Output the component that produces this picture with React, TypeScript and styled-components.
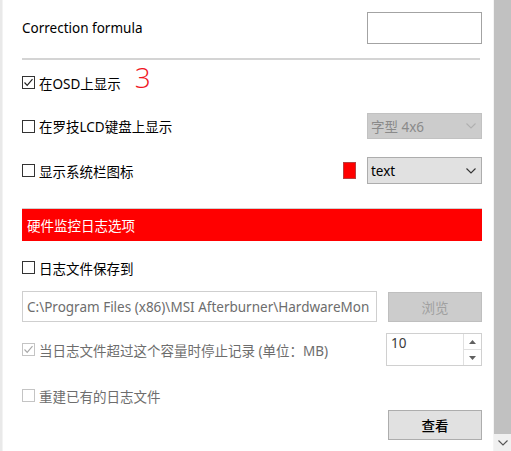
import React from "react";
import styled, { createGlobalStyle } from "styled-components";

const Global = createGlobalStyle`
  html, body { margin: 0; padding: 0; background: #fff; }
  body { font-family: "Noto Sans", "Noto Sans CJK SC", sans-serif; font-size: 13.5px; color: #000; }
`;

const Window = styled.div`
  width: 511px;
  height: 451px;
  display: flex;
  overflow: hidden;
  background: #fff;
`;

const LeftEdge = styled.div`
  width: 3px;
  background: #e9e9e9;
  border-right: 1px solid #f3f3f3;
  box-sizing: border-box;
`;

const Content = styled.div`
  flex: 1;
  display: flex;
  flex-direction: column;
  padding: 0 11px 0 19px;
  min-width: 0;
`;

const Row = styled.div<{ $top: number; $h: number; $start?: boolean }>`
  margin-top: ${(p) => p.$top}px;
  height: ${(p) => p.$h}px;
  display: flex;
  align-items: center;
  justify-content: ${(p) => (p.$start ? "flex-start" : "space-between")};
  flex-shrink: 0;
`;

const Label = styled.span<{ $disabled?: boolean }>`
  color: ${(p) => (p.$disabled ? "#6d6d6d" : "#000")};
  white-space: nowrap;
`;

const TextBox = styled.div<{ $w: number; $h: number }>`
  width: ${(p) => p.$w}px;
  height: ${(p) => p.$h}px;
  box-sizing: border-box;
  border: 1px solid #a3a3a3;
  background: #fff;
`;

const Separator = styled.div`
  margin-top: 14px;
  height: 2px;
  width: 458px;
  background: #d4d4d4;
  flex-shrink: 0;
`;

const CheckLabel = styled.label`
  display: flex;
  align-items: center;
  gap: 4px;
`;

const Box = styled.span<{ $disabled?: boolean }>`
  width: 13px;
  height: 13px;
  box-sizing: border-box;
  border: 1px solid ${(p) => (p.$disabled ? "#c4c4c4" : "#333")};
  background: #fff;
  display: flex;
  align-items: center;
  justify-content: center;
`;

const Badge = styled.span`
  font-family: "Open Sans", "Noto Sans", sans-serif;
  font-weight: 300;
  font-size: 28px;
  line-height: 1;
  color: #f0141e;
  margin-left: 14px;
  margin-top: -11px;
`;

const Right = styled.div`
  display: flex;
  align-items: center;
  gap: 11px;
`;

const Swatch = styled.span`
  width: 13px;
  height: 17px;
  box-sizing: border-box;
  background: #ff0000;
  border: 1px solid #b84040;
`;

const Select = styled.div<{ $disabled?: boolean; $h: number }>`
  width: 115px;
  height: ${(p) => p.$h}px;
  box-sizing: border-box;
  border: 1px solid ${(p) => (p.$disabled ? "#c2c2c2" : "#adadad")};
  background: ${(p) => (p.$disabled ? "#cccccc" : "#e1e1e1")};
  color: ${(p) => (p.$disabled ? "#8a8a8a" : "#000")};
  display: flex;
  align-items: center;
  justify-content: space-between;
  padding: 0 5px 0 3px;
`;

const Banner = styled.div`
  margin-top: 24px;
  height: 33px;
  flex-shrink: 0;
  width: 460px;
  box-sizing: border-box;
  background: #ff0000;
  border-top: 1px solid #d0d0d0;
  color: #fff;
  display: flex;
  align-items: center;
  padding-left: 5px;
`;

const PathBox = styled.div`
  width: 355px;
  height: 31px;
  box-sizing: border-box;
  border: 1px solid #cfcfcf;
  background: #fff;
  color: #6d6d6d;
  display: flex;
  align-items: center;
  padding-left: 4px;
  overflow: hidden;
  white-space: nowrap;
`;

const Button = styled.div<{ $disabled?: boolean }>`
  width: 94px;
  height: 30px;
  box-sizing: border-box;
  border: 1px solid ${(p) => (p.$disabled ? "#bfbfbf" : "#adadad")};
  background: ${(p) => (p.$disabled ? "#cccccc" : "#e1e1e1")};
  color: ${(p) => (p.$disabled ? "#a0a0a0" : "#000")};
  display: flex;
  align-items: center;
  justify-content: center;
  font-weight: ${(p) => (p.$disabled ? 400 : 500)};
`;

const Spin = styled.div`
  width: 96px;
  height: 33px;
  box-sizing: border-box;
  border: 1px solid #d0d0d0;
  background: #fff;
  display: flex;
`;

const SpinValue = styled.div`
  flex: 1;
  padding: 0 0 0 4px;
  color: #3a3a3a;
`;

const SpinButtons = styled.div`
  width: 17px;
  border-left: 1px solid #e0e0e0;
  display: flex;
  flex-direction: column;
`;

const SpinBtn = styled.div<{ $first?: boolean }>`
  flex: 1;
  display: flex;
  align-items: center;
  justify-content: center;
  border-top: ${(p) => (p.$first ? "none" : "1px solid #e0e0e0")};
`;

const ButtonRow = styled.div`
  margin-top: 1px;
  height: 30px;
  display: flex;
  justify-content: flex-end;
  flex-shrink: 0;
`;

const ScrollBar = styled.div`
  width: 17px;
  display: flex;
  flex-direction: column;
  background: #f0f0f0;
  border-left: 1px solid #f4f4f4;
`;

const Thumb = styled.div`
  height: 434px;
  background: #c1c1c1;
`;

const ArrowArea = styled.div`
  flex: 1;
  display: flex;
  align-items: center;
  justify-content: center;
`;

const Check = ({ color }: { color: string }) => (
  <svg width="11" height="11" viewBox="0 0 11 11">
    <path d="M1.5 5.5 L4.2 8.3 L9.5 2.2" fill="none" stroke={color} strokeWidth="1.2" />
  </svg>
);

const Chevron = ({ color }: { color: string }) => (
  <svg width="10" height="6" viewBox="0 0 10 6">
    <path d="M0.5 0.5 L5 5 L9.5 0.5" fill="none" stroke={color} strokeWidth="1.1" />
  </svg>
);

const Tri = ({ up }: { up?: boolean }) => (
  <svg width="7" height="4" viewBox="0 0 7 4">
    <path d={up ? "M0 4 L3.5 0 L7 4 Z" : "M0 0 L3.5 4 L7 0 Z"} fill="#606060" />
  </svg>
);

const CheckItem = ({
  text,
  checked,
  disabled,
}: {
  text: string;
  checked?: boolean;
  disabled?: boolean;
}) => (
  <CheckLabel>
    <Box $disabled={disabled}>{checked && <Check color={disabled ? "#a8a8a8" : "#222"} />}</Box>
    <Label $disabled={disabled}>{text}</Label>
  </CheckLabel>
);

export default function App() {
  return (
    <>
      <Global />
      <Window>
        <LeftEdge />
        <Content>
          <Row $top={12} $h={32}>
            <Label>Correction formula</Label>
            <TextBox $w={115} $h={32} />
          </Row>
          <Separator />
          <Row $top={6} $h={33} $start>
            <CheckItem text="在OSD上显示" checked />
            <Badge>3</Badge>
          </Row>
          <Row $top={14} $h={26}>
            <CheckItem text="在罗技LCD键盘上显示" />
            <Select $disabled $h={26}>
              <span>字型 4x6</span>
              <Chevron color="#b0b0b0" />
            </Select>
          </Row>
          <Row $top={18} $h={27}>
            <CheckItem text="显示系统栏图标" />
            <Right>
              <Swatch />
              <Select $h={27}>
                <span>text</span>
                <Chevron color="#333" />
              </Select>
            </Right>
          </Row>
          <Banner>硬件监控日志选项</Banner>
          <Row $top={13} $h={27}>
            <CheckItem text="日志文件保存到" />
          </Row>
          <Row $top={10} $h={31}>
            <PathBox>C:\Program Files (x86)\MSI Afterburner\HardwareMon</PathBox>
            <Button $disabled>浏览</Button>
          </Row>
          <Row $top={11} $h={33}>
            <CheckItem text="当日志文件超过这个容量时停止记录 (单位：MB)" checked disabled />
            <Spin>
              <SpinValue>10</SpinValue>
              <SpinButtons>
                <SpinBtn $first>
                  <Tri up />
                </SpinBtn>
                <SpinBtn>
                  <Tri />
                </SpinBtn>
              </SpinButtons>
            </Spin>
          </Row>
          <Row $top={16} $h={27}>
            <CheckItem text="重建已有的日志文件" disabled />
          </Row>
          <ButtonRow>
            <Button>查看</Button>
          </ButtonRow>
        </Content>
        <ScrollBar>
          <Thumb />
          <ArrowArea>
            <Chevron color="#555" />
          </ArrowArea>
        </ScrollBar>
      </Window>
    </>
  );
}
